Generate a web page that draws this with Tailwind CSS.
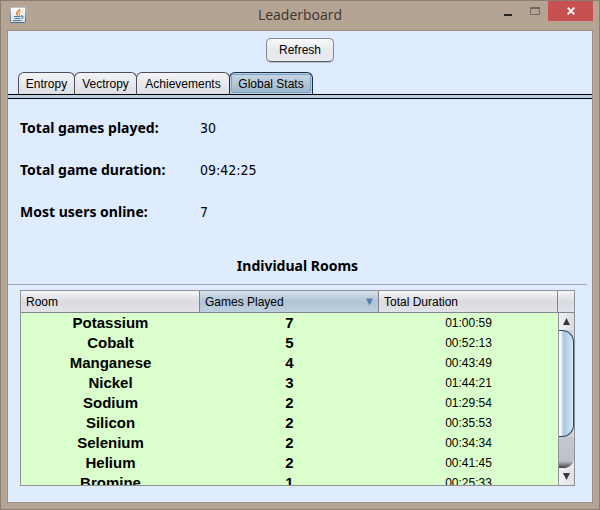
<!DOCTYPE html>
<html lang="en">
<head>
<meta charset="utf-8">
<meta name="viewport" content="width=device-width, initial-scale=1">
<title>Leaderboard</title>
<script src="https://cdn.jsdelivr.net/npm/@tailwindcss/browser@4"></script>
</head>
<body class="font-['Liberation_Sans',Arial,sans-serif] text-xs text-black">
<div class="flex h-screen flex-col border border-[#8c7e71] bg-[#b5a493] px-1.5 pb-1.5">
  <header class="grid h-[29px] shrink-0 grid-cols-[1fr_auto_1fr] items-start">
    <svg class="mt-1.5 ml-[3px] size-4" viewBox="0 0 16 16" aria-label="Java">
      <defs>
        <linearGradient id="tile" x1="0" y1="0" x2="0" y2="1"><stop offset="0" stop-color="#fdfeff"/><stop offset="1" stop-color="#d3e0e9"/></linearGradient>
        <linearGradient id="rim" x1="0" y1="0" x2="0" y2="1"><stop offset="0" stop-color="#b4c2cb"/><stop offset="1" stop-color="#456a84"/></linearGradient>
      </defs>
      <rect x=".5" y=".5" width="15" height="15" rx="1" fill="url(#tile)" stroke="url(#rim)"/>
      <path d="M9.700 1.800c.5 2-3.500 2.700-3 4.700.2.900 1 1.300 1.200 2.100" fill="none" stroke="#e8761e" stroke-width="1.400"/>
      <path d="M10.800 4.500c-1.700.7-2.600 1.500-1.600 2.500.5.600.3 1.200-.2 1.700" fill="none" stroke="#ee9138" stroke-width="1.100"/>
      <path d="M4 9.500h6.500M4.800 11.500h5.200M3 13.500h8.500" fill="none" stroke="#4c7795"/>
      <path d="M11 9c2.600-.6 2.600 2 .2 2.400" fill="none" stroke="#4c7795" stroke-width="1.100"/>
    </svg>
    <h1 class="pt-1 font-['Open_Sans','Noto_Sans',sans-serif] text-sm leading-5 text-[#3b3632]">Leaderboard</h1>
    <div class="flex justify-end">
      <button type="button" aria-label="Minimize" class="flex h-5 w-[26px] items-center justify-center">
        <svg class="size-4" viewBox="0 0 16 16"><path d="M4 11h8v2H4z" fill="#26221f"/></svg>
      </button>
      <button type="button" aria-label="Maximize" class="flex h-5 w-[27px] items-center justify-center">
        <svg class="size-4" viewBox="0 0 16 16"><path d="M3.500 5v6.500h9V5" fill="none" stroke="#6f665d"/><path d="M3 4h10v2H3z" fill="#6f665d"/></svg>
      </button>
      <button type="button" aria-label="Close" class="flex h-5 w-[45px] items-center justify-center bg-[#c75050]">
        <svg class="h-2 w-2" viewBox="0 0 8 8"><path d="M.7.700l6.600 6.600M7.300.700L.7 7.300" stroke="#fff" stroke-width="1.900"/></svg>
      </button>
    </div>
  </header>

  <main class="flex min-h-0 flex-1 flex-col border border-[#998b7d] bg-[#dfecff]">
    <div class="flex shrink-0 justify-center pt-[7px] pb-2.5">
      <button type="button" class="h-6 rounded-[5px] border border-[#82868f] border-b-[#5b5f69] bg-linear-to-b from-[#fafafb] via-[#e6e8ec] to-[#e9ebef] px-3 leading-5 shadow-[0_1px_0_#b5bfcf]">Refresh</button>
    </div>

    <nav role="tablist" aria-label="Statistics" class="flex h-[22px] shrink-0 pl-2.5">
      <button type="button" role="tab" aria-selected="false" class="w-[57px] rounded-t-md border border-b-0 border-[#4c505c] bg-linear-to-b from-[#f3f4f6] to-[#dcdee4]">Entropy</button>
      <button type="button" role="tab" aria-selected="false" class="-ml-px w-[63px] rounded-t-md border border-b-0 border-[#4c505c] bg-linear-to-b from-[#f3f4f6] to-[#dcdee4]">Vectropy</button>
      <button type="button" role="tab" aria-selected="false" class="-ml-px w-[94px] rounded-t-md border border-b-0 border-[#4c505c] bg-linear-to-b from-[#f3f4f6] to-[#dcdee4]">Achievements</button>
      <button type="button" role="tab" aria-selected="true" class="-ml-px w-[84px] rounded-t-md border border-b-0 border-[#1d2b3c] bg-[#bccfdf] p-px"><span class="block h-full rounded-xs border border-[#73a4d1] bg-linear-to-b from-[#c6d5e2] to-[#a0b7ca] leading-[18px]">Global Stats</span></button>
    </nav>
    <div class="h-[5px] shrink-0 border-y border-black bg-[#bacee1]"></div>

    <section role="tabpanel" class="flex min-h-0 flex-1 flex-col pt-2 pr-[5px] pb-4">
      <dl class="grid shrink-0 auto-rows-[42px] grid-cols-[180px_1fr] items-center pl-3 font-['DejaVu_Sans_Condensed','DejaVu_Sans',sans-serif] text-sm">
        <dt class="font-['Noto_Sans','Open_Sans',sans-serif] font-bold">Total games played:</dt><dd>30</dd>
        <dt class="font-['Noto_Sans','Open_Sans',sans-serif] font-bold">Total game duration:</dt><dd>09:42:25</dd>
        <dt class="font-['Noto_Sans','Open_Sans',sans-serif] font-bold">Most users online:</dt><dd>7</dd>
      </dl>
      <h2 class="mb-[5px] flex h-[52px] shrink-0 items-end justify-center border-b border-[#a0a6b2] pb-2 font-['Noto_Sans','Open_Sans',sans-serif] text-sm font-bold">Individual Rooms</h2>

      <div class="relative mx-3 min-h-0 flex-1 overflow-hidden border border-[#8f929c] bg-[#dbffcc]">
        <table class="w-full table-fixed border-separate border-spacing-0">
          <colgroup><col><col><col><col class="w-4"></colgroup>
          <thead>
            <tr class="h-[22px] bg-linear-to-b from-[#f5f6f8] via-[#d9dbe1] to-[#e2e4e9] text-left">
              <th class="border-r border-b border-[#81858f] px-[5px] font-normal">Room</th>
              <th class="border-r border-b border-[#81858f] bg-linear-to-b from-[#d6e1ea] via-[#b0c4d5] to-[#bdd0df] px-[5px] font-normal" aria-sort="descending">
                <span class="flex items-center justify-between">Games Played
                  <svg class="h-2 w-[7px]" viewBox="0 0 7 8"><path d="M0 .5h7L3.500 7.500z" fill="#5580ad"/></svg>
                </span>
              </th>
              <th class="border-r border-b border-[#81858f] px-[5px] font-normal">Total Duration</th>
              <td class="border-b border-[#81858f]"></td>
            </tr>
          </thead>
          <tbody class="text-center text-[15px] leading-5 font-bold">
            <tr class="h-5"><td>Potassium</td><td>7</td><td class="text-xs leading-5 font-normal">01:00:59</td></tr>
            <tr class="h-5"><td>Cobalt</td><td>5</td><td class="text-xs leading-5 font-normal">00:52:13</td></tr>
            <tr class="h-5"><td>Manganese</td><td>4</td><td class="text-xs leading-5 font-normal">00:43:49</td></tr>
            <tr class="h-5"><td>Nickel</td><td>3</td><td class="text-xs leading-5 font-normal">01:44:21</td></tr>
            <tr class="h-5"><td>Sodium</td><td>2</td><td class="text-xs leading-5 font-normal">01:29:54</td></tr>
            <tr class="h-5"><td>Silicon</td><td>2</td><td class="text-xs leading-5 font-normal">00:35:53</td></tr>
            <tr class="h-5"><td>Selenium</td><td>2</td><td class="text-xs leading-5 font-normal">00:34:34</td></tr>
            <tr class="h-5"><td>Helium</td><td>2</td><td class="text-xs leading-5 font-normal">00:41:45</td></tr>
            <tr class="h-5"><td>Bromine</td><td>1</td><td class="text-xs leading-5 font-normal">00:25:33</td></tr>
          </tbody>
        </table>

        <div class="absolute top-[22px] right-0 bottom-0 flex w-4 flex-col overflow-hidden border-l border-[#8f929c] bg-linear-to-r from-[#b9bbc2] to-[#d5d7dc]">
          <button type="button" aria-label="Scroll up" class="flex h-[17px] shrink-0 items-center justify-center bg-linear-to-r from-[#f1f2f4] to-[#d9dbe0]">
            <svg class="h-[7px] w-[7px]" viewBox="0 0 7 7"><path d="M3.500 0L7 7H0z" fill="#363636"/></svg>
          </button>
          <div class="h-[107px] shrink-0 rounded-r-[12px] border border-l-0 border-[#27435e] bg-linear-to-r from-[#fafcff] from-10% via-[#a9c4de] via-35% to-[#d3ebfa]"></div>
          <svg class="min-h-0 w-full flex-1" viewBox="0 0 15 32" preserveAspectRatio="none" aria-hidden="true">
            <defs><linearGradient id="shade" x1="0" y1="0" x2="0" y2="1"><stop offset="0" stop-color="#c5c7ce"/><stop offset=".78" stop-color="#bfc1c7"/><stop offset="1" stop-color="#3e3f42"/></linearGradient></defs>
            <path d="M0 0h15v32H0z" fill="url(#shade)"/>
            <path d="M15 23c-1 5-4 8-9 9h9z" fill="#e9eaed"/>
          </svg>
          <button type="button" aria-label="Scroll down" class="flex h-[17px] shrink-0 items-center justify-center bg-linear-to-r from-[#f1f2f4] to-[#dfe1e5]">
            <svg class="h-[7px] w-[7px]" viewBox="0 0 7 7"><path d="M0 0h7L3.500 7z" fill="#363636"/></svg>
          </button>
        </div>
      </div>
    </section>
  </main>
</div>
</body>
</html>
